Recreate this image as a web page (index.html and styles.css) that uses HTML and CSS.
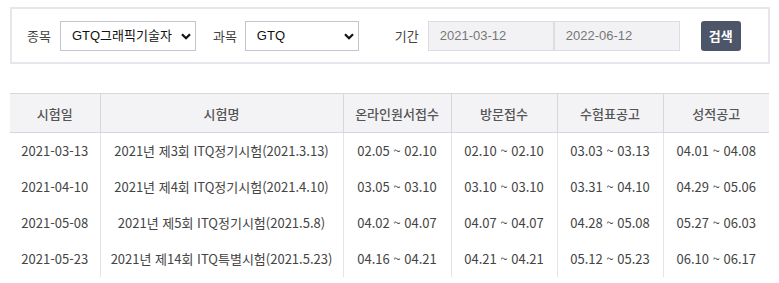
FILE: index.html
```html
<!DOCTYPE html>
<html lang="ko">
<head>
<meta charset="utf-8">
<link rel="stylesheet" href="styles.css">
</head>
<body>
<div class="page">
  <form class="filter">
    <label class="lbl">종목</label>
    <span class="sel-wrap w1">
      <select class="sel"><option>GTQ그래픽기술자</option></select>
      <svg class="chev" width="10" height="7" viewBox="0 0 10 7"><path d="M1 1.2 L5 5.2 L9 1.2" fill="none" stroke="#111" stroke-width="2.2"/></svg>
    </span>
    <label class="lbl l2">과목</label>
    <span class="sel-wrap w2">
      <select class="sel"><option>GTQ</option></select>
      <svg class="chev" width="10" height="7" viewBox="0 0 10 7"><path d="M1 1.2 L5 5.2 L9 1.2" fill="none" stroke="#111" stroke-width="2.2"/></svg>
    </span>
    <label class="lbl l3">기간</label>
    <span class="dates">
      <input class="date" type="text" value="2021-03-12" readonly>
      <input class="date" type="text" value="2022-06-12" readonly>
    </span>
    <button class="btn" type="button">검색</button>
  </form>

  <table class="sched">
    <colgroup>
      <col class="c1"><col class="c2"><col class="c3"><col class="c4"><col class="c5"><col class="c6">
    </colgroup>
    <thead>
      <tr><th>시험일</th><th>시험명</th><th>온라인원서접수</th><th>방문접수</th><th>수험표공고</th><th>성적공고</th></tr>
    </thead>
    <tbody>
      <tr><td>2021-03-13</td><td>2021년 제3회 ITQ정기시험(2021.3.13)</td><td>02.05 ~ 02.10</td><td>02.10 ~ 02.10</td><td>03.03 ~ 03.13</td><td>04.01 ~ 04.08</td></tr>
      <tr><td>2021-04-10</td><td>2021년 제4회 ITQ정기시험(2021.4.10)</td><td>03.05 ~ 03.10</td><td>03.10 ~ 03.10</td><td>03.31 ~ 04.10</td><td>04.29 ~ 05.06</td></tr>
      <tr><td>2021-05-08</td><td>2021년 제5회 ITQ정기시험(2021.5.8)</td><td>04.02 ~ 04.07</td><td>04.07 ~ 04.07</td><td>04.28 ~ 05.08</td><td>05.27 ~ 06.03</td></tr>
      <tr><td>2021-05-23</td><td>2021년 제14회 ITQ특별시험(2021.5.23)</td><td>04.16 ~ 04.21</td><td>04.21 ~ 04.21</td><td>05.12 ~ 05.23</td><td>06.10 ~ 06.17</td></tr>
    </tbody>
  </table>
</div>
</body>
</html>
```

FILE: styles.css
```css
* { box-sizing: border-box; }
html, body { margin: 0; padding: 0; background: #fff; }
body { font-family: "Noto Sans CJK KR", "Noto Sans", sans-serif; color: #333; }
.page { padding: 7px 0 0 10px; width: 770px; }

.filter {
  display: flex;
  align-items: center;
  height: 57px;
  border: 2px solid #e6e6ec;
  padding: 0 0 0 15px;
  margin: 0;
}
.lbl { font-size: 13px; color: #444; line-height: 30px; margin-right: 9px; }
.l2 { margin-left: 17px; margin-right: 8px; }
.l3 { margin-left: 36px; margin-right: 9px; }

.sel-wrap { position: relative; display: inline-block; height: 30px; }
.w1 { width: 136px; }
.w2 { width: 114px; }
.sel {
  appearance: none;
  -webkit-appearance: none;
  width: 100%;
  height: 30px;
  border: 1px solid #c4c4cc;
  border-radius: 0;
  background: #fff;
  padding: 0 0 0 11px;
  font-family: "Liberation Sans", "Noto Sans CJK KR", sans-serif;
  font-size: 13px;
  color: #111;
  outline: none;
}
.chev { position: absolute; right: 5px; top: 12px; pointer-events: none; }

.dates { display: flex; }
.date {
  width: 126px;
  height: 30px;
  border: 1px solid #dcdce2;
  background: #f2f2f5;
  padding: 0 0 0 11px;
  font-family: "Liberation Sans", sans-serif;
  font-size: 13px;
  color: #777;
  outline: none;
  margin: 0;
}
.btn {
  margin-left: 21px;
  width: 40px;
  height: 30px;
  border: 0;
  border-radius: 3px;
  background: #4d5568;
  color: #fff;
  font-family: "Noto Sans CJK KR", sans-serif;
  font-weight: 700;
  font-size: 13px;
  padding: 0;
}

.sched {
  margin-top: 29px;
  width: 759px;
  border-collapse: collapse;
  table-layout: fixed;
  font-size: 13px;
}
.c1 { width: 90px; }
.c2 { width: 243px; }
.c3 { width: 108px; }
.c4 { width: 106px; }
.c5 { width: 106px; }
.c6 { width: 106px; }
.sched th {
  height: 39px;
  background: #f3f3f6;
  border-top: 1px solid #d6d6dc;
  border-bottom: 1px solid #d6d6dc;
  border-left: 1px solid #d6d6dc;
  font-weight: 500;
  color: #555;
  padding: 0;
}
.sched td {
  height: 36px;
  text-align: center;
  color: #444;
  border-left: 1px solid #e3e3e8;
  padding: 0;
  white-space: nowrap;
}
.sched th:first-child, .sched td:first-child { border-left: 0; }
```
